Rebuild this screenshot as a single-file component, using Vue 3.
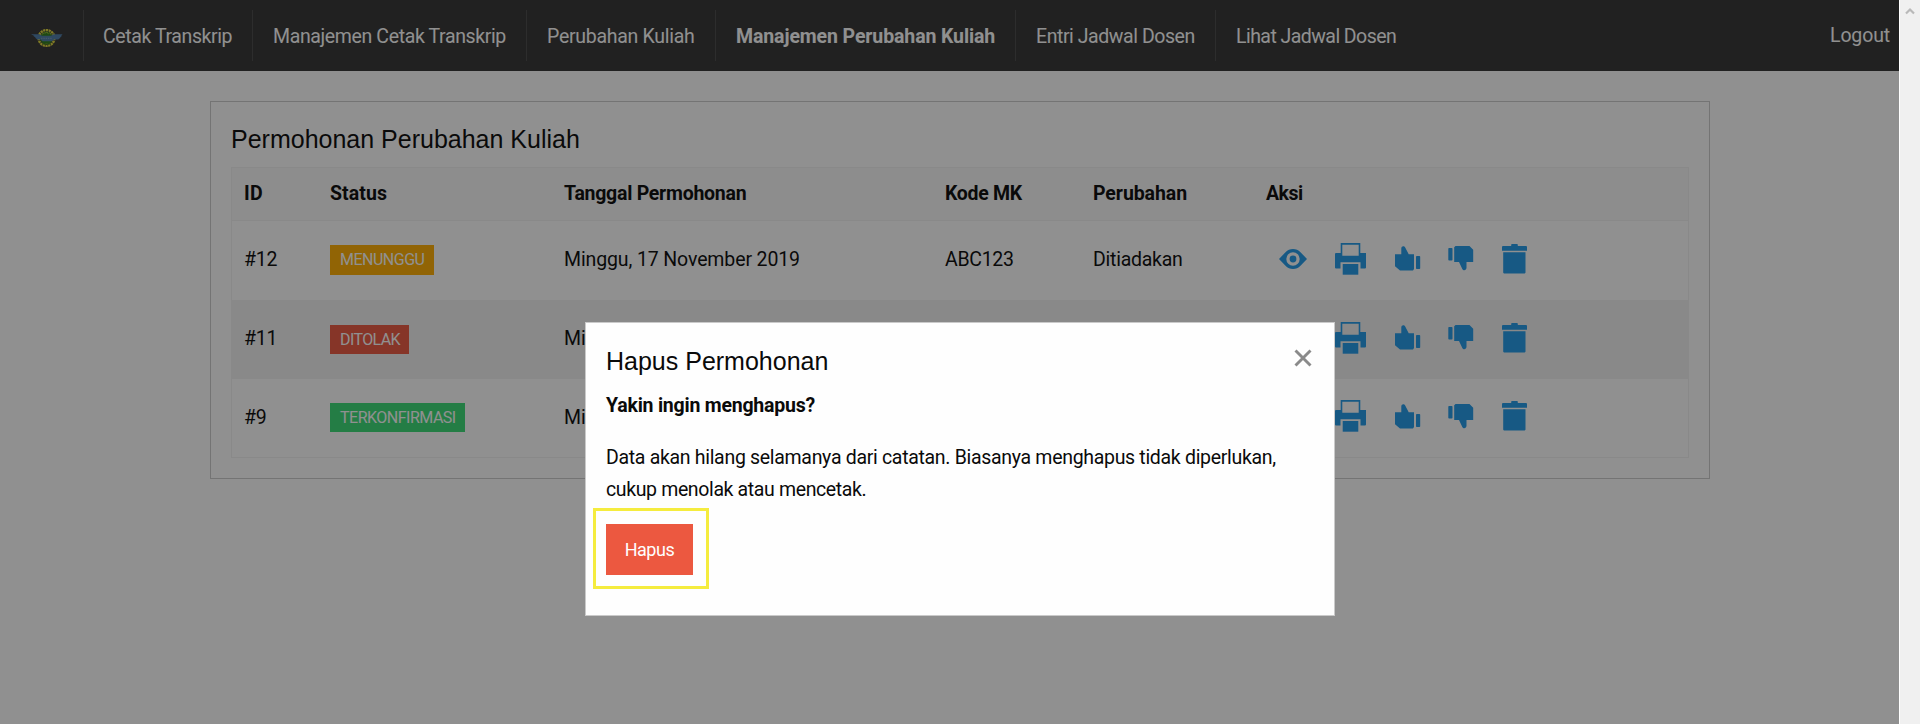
<script setup>
const menu = [
  { label: 'Cetak Transkrip', width: 169, spacing: -0.4 },
  { label: 'Manajemen Cetak Transkrip', width: 274, spacing: -0.37 },
  { label: 'Perubahan Kuliah', width: 189, spacing: -0.28 },
  { label: 'Manajemen Perubahan Kuliah', width: 300, spacing: -0.11, active: true },
  { label: 'Entri Jadwal Dosen', width: 200, spacing: -0.44 },
  { label: 'Lihat Jadwal Dosen', width: 201, spacing: -0.55 },
]

const columns = [
  { label: 'ID', spacing: 0.3 },
  { label: 'Status', spacing: 0.07 },
  { label: 'Tanggal Permohonan', spacing: -0.26 },
  { label: 'Kode MK', spacing: -0.3 },
  { label: 'Perubahan', spacing: -0.08 },
  { label: 'Aksi', spacing: -0.5 },
]

const rows = [
  { id: '#12', status: 'MENUNGGU', kind: 'warning', date: 'Minggu, 17 November 2019', code: 'ABC123', change: 'Ditiadakan' },
  { id: '#11', status: 'DITOLAK', kind: 'alert', date: 'Mi', code: '', change: '' },
  { id: '#9', status: 'TERKONFIRMASI', kind: 'success', date: 'Mi', code: '', change: '' },
]

const track = (v) => ({ letterSpacing: v + 'px' })
</script>

<template>
  <div class="window">
    <div class="page">
      <nav class="topbar">
        <div class="logo">
          <svg width="32" height="20" viewBox="0 0 32 20">
            <circle cx="15.5" cy="10" r="7.9" fill="none" stroke="#dfd63c" stroke-width="2.4" stroke-dasharray="2.2 0.6" />
            <circle cx="15.5" cy="10" r="6.4" fill="#2f7d1c" />
            <path d="M11 6.500l2-2M14 5.500l1.500-1.500 2 1.700M18.500 4.500l1.500 2" stroke="#b5c43a" stroke-width="1" fill="none" />
            <path d="M0 6.200h8.500l2.500 1.600h9l2.500-1.600H31.500l-1.300 1.800h.5l-1.700 1.800h.3l-2 1.700h-4.300l-2 1.700h-9.500l-2-1.700H6.200l-2-1.700h.6L2.500 8h.8z" fill="#4d7ca8" />
            <path d="M10 10.300h11" stroke="#7597b6" stroke-width="1.200" stroke-dasharray="1.500 .8" />
            <path d="M11.500 15.500l2 1 2-1 2 1 2-1" stroke="#5d931f" stroke-width="1" fill="none" />
          </svg>
        </div>
        <ul class="menu">
          <li v-for="m in menu" :key="m.label" :class="{ active: m.active }" :style="{ width: m.width + 'px', letterSpacing: m.spacing + 'px' }">{{ m.label }}</li>
        </ul>
        <span class="logout">Logout</span>
      </nav>

      <main class="card">
        <h5>Permohonan Perubahan Kuliah</h5>
        <div class="table">
          <div class="row head">
            <span v-for="c in columns" :key="c.label" :style="track(c.spacing)">{{ c.label }}</span>
          </div>
          <div v-for="r in rows" :key="r.id" class="row">
            <span>{{ r.id }}</span>
            <span><b class="label" :class="r.kind">{{ r.status }}</b></span>
            <span class="date">{{ r.date }}</span>
            <span class="code">{{ r.code }}</span>
            <span>{{ r.change }}</span>
            <span class="actions">
              <svg class="eye" width="28" height="20" viewBox="0 0 28 20">
                <path fill-rule="evenodd" d="M0 10L6.500 3.200C8.700 1 11 0 14 0s5.300 1 7.500 3.200L28 10l-6.500 6.800C19.300 19 17 20 14 20s-5.300-1-7.500-3.200zM14 3.300a6.700 6.700 0 1 0 0 13.400 6.700 6.700 0 0 0 0-13.400z" />
                <circle cx="14" cy="10" r="3.400" />
              </svg>
              <svg class="print" width="31" height="32" viewBox="0 0 31 32">
                <path fill-rule="evenodd" d="M5.700 0h19.600v10H31v14.500a1 1 0 0 1-1 1h-4.500v-6.300H5.500v6.300H1a1 1 0 0 1-1-1V11a1 1 0 0 1 1-1h4.700zM7.300 1.700v11h16.400v-11z" />
                <path d="M7.700 21h15.600v10.700H7.700z" />
              </svg>
              <svg class="like" width="26" height="25" viewBox="0 0 26 25">
                <path d="M0 8.200h6.300V2.500C6.300-.2 9.300-.5 10.200 1.500L13.700 8.200h5.300v14.800l-1 1.500H5L0 20.200z" />
                <rect x="21" y="10" width="4.200" height="13" rx=".8" />
              </svg>
              <svg class="dislike" width="26" height="25" viewBox="0 0 26 25">
                <rect x=".3" y="2" width="4.200" height="12.500" rx=".8" />
                <path d="M6.200 1.200l1.300-1.200h14l3.700 3.700V16h-6.700v5.700c0 2.800-3.300 3.200-4.200 1.200L11 16H6.200z" />
              </svg>
              <svg class="trash" width="25" height="30" viewBox="0 0 25 30">
                <path d="M1 2h8.200V.8a.8.8 0 0 1 .8-.8h5a.8.800 0 0 1 .8.8V2H24a1 1 0 0 1 1 1v3.700H0V3a1 1 0 0 1 1-1zM1.200 8.200h22.300v20.400a.8.800 0 0 1-.8.8H2a.8.800 0 0 1-.8-.8z" />
              </svg>
            </span>
          </div>
        </div>
      </main>

      <div class="overlay">
        <section class="modal">
          <header>
            <h5>Hapus Permohonan</h5>
            <svg class="close" width="18" height="18" viewBox="0 0 18 18">
              <path d="M1.500 1.500l15 15M16.500 1.500l-15 15" stroke="#8a8a8a" stroke-width="2.900" />
            </svg>
          </header>
          <p class="question">Yakin ingin menghapus?</p>
          <p class="body">
            <span>Data akan hilang selamanya dari catatan. Biasanya menghapus tidak diperlukan,</span><br>
            <span class="second">cukup menolak atau mencetak.</span>
          </p>
          <div class="highlight"><button type="button">Hapus</button></div>
        </section>
      </div>
    </div>
    <aside class="scrollbar">
      <svg width="10" height="8" viewBox="0 0 10 8"><path d="M1 6.500l4-4 4 4" fill="none" stroke="#b9b9b9" stroke-width="2.200" /></svg>
    </aside>
  </div>
</template>

<style>
html, body { background: #fefefe; overflow: hidden; }
</style>

<style scoped>
.window { display: flex; width: 1920px; height: 724px; font: 19.5px/1.6 Roboto, "Open Sans", sans-serif; color: #0a0a0a; }
.page { position: relative; width: 1899px; background: #fefefe; }
.scrollbar { box-sizing: border-box; width: 21px; border-left: 1px solid #fff; background: #f0f0f0; padding: 7px 0 0 5px; line-height: 0; }
h5 { margin: 0; font: 25px/35px "Liberation Sans", Arial, sans-serif; }

.topbar { box-sizing: border-box; display: flex; height: 71px; padding: 10px 9px 10px 0; background: #333; color: #fefefe; }
.logo { box-sizing: border-box; width: 84px; height: 51px; padding: 18px 0 0 31px; border-right: 1px solid #4a4a4a; line-height: 0; }
.menu { display: flex; margin: 0; padding: 0; list-style: none; }
.menu li { box-sizing: border-box; height: 51px; padding-left: 20px; border-right: 1px solid #4a4a4a; line-height: 54px; white-space: nowrap; }
.menu li:first-child { padding-left: 19px; }
.menu li:last-child { border-right: 0; }
.menu .active { font-weight: 700; }
.logout { margin-left: auto; line-height: 52px; letter-spacing: -0.14px; }

.card { box-sizing: border-box; width: 1500px; height: 378px; margin: 30px 0 0 210px; padding: 20px; border: 1px solid #cacaca; }
.table { box-sizing: border-box; width: 1458px; margin-top: 10px; border: 1px solid #f1f1f1; }
.row { box-sizing: border-box; display: grid; grid-template-columns: 86px 234px 381px 148px 173px 1fr; align-items: center; height: 79px; padding: 0 0 1px 12px; letter-spacing: -0.25px; white-space: nowrap; }
.row.head { height: 53px; border-bottom: 1px solid #f1f1f1; background: #f8f8f8; font-weight: 700; }
.row:nth-child(3) { background: #f1f1f1; }
.row:nth-child(4) { height: 78px; }
.date { letter-spacing: -0.12px; }
.code { letter-spacing: -0.3px; }
.label { display: block; box-sizing: border-box; height: 29px; padding-left: 10px; color: #fefefe; font: 16px/30px Roboto, sans-serif; }
.warning { width: 104px; height: 30px; background: #ffae00; letter-spacing: -0.5px; }
.alert { width: 79px; background: #ec5840; letter-spacing: -0.6px; }
.success { width: 135px; background: #3adb76; letter-spacing: -0.5px; }
.actions { display: flex; align-items: center; padding: 0 0 3px 13px; fill: #2199e8; }
.print { margin-left: 28px; }
.like { margin-left: 29px; }
.dislike { margin-left: 27px; }
.trash { margin-left: 28px; }

.overlay { position: absolute; inset: 0; background: rgba(10, 10, 10, .45); }
.modal { box-sizing: border-box; width: 750px; height: 294px; margin: 322px 0 0 585px; padding: 21px 20px 20px; border: 1px solid #cacaca; background: #fefefe; }
.modal header { display: flex; justify-content: space-between; height: 45px; }
.close { margin: 5px 2px 0 0; }
p { margin: 0; white-space: nowrap; line-height: 32px; }
.question { margin-top: 1px; font-weight: 700; letter-spacing: -0.22px; }
.body { margin-top: 20px; letter-spacing: -0.31px; }
.second { letter-spacing: -0.37px; }
.highlight { box-sizing: border-box; width: 116px; height: 81px; margin: 2px 0 0 -13px; padding: 13px 0 0 10px; border: 3px solid #f5ec3e; }
button { display: block; width: 87px; height: 51px; padding: 0; border: 0; background: #ec5840; color: #fefefe; font: 18px/51px Roboto, sans-serif; letter-spacing: -0.45px; }
</style>
